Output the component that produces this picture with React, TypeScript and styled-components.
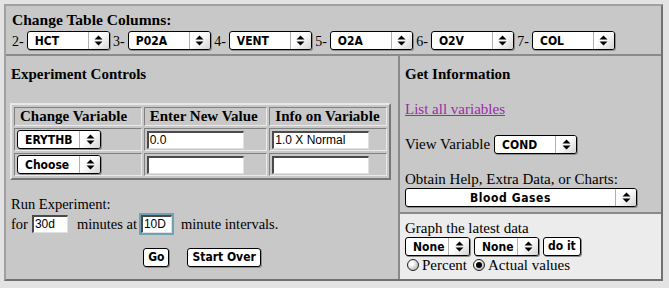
import React from 'react'
import styled, { createGlobalStyle } from 'styled-components'

const serif = '"Liberation Serif", "Times New Roman", Times, serif'

const GlobalStyle = createGlobalStyle`
  html, body {
    margin: 0;
    background: #e3e3e3;
  }
  body {
    font-family: ${serif};
    font-size: 15px;
    color: #000;
  }
`

const Page = styled.div`
  padding: 4px 0 0 4px;
`

const Frame = styled.div`
  width: 655px;
  height: 273px;
  border: 2px solid;
  border-color: #a0a0a0 #707070 #707070 #a0a0a0;
  background: #c8c8c8;
  display: grid;
  grid-template-columns: 394px 1fr;
  grid-template-rows: 50px 1fr;
`

const TopSection = styled.div`
  grid-column: 1 / 3;
  border-bottom: 2px solid #8a8a8a;
  padding: 5px 0 0 6px;
`

const Heading = styled.div`
  font-weight: 700;
  font-size: 15.5px;
  line-height: 17px;
`

const ColumnRow = styled.div`
  display: flex;
  align-items: center;
  margin-top: 3px;
`

const ColNum = styled.span`
  font-size: 14px;
  margin: 3px 3px 0 0;
  &:not(:first-child) {
    margin-left: 3.4px;
  }
`

const Popup = styled.div<{ w: number }>`
  width: ${p => p.w}px;
  height: 17px;
  box-sizing: content-box;
  border: 1px solid #000;
  border-radius: 3px;
  background: #fff;
  box-shadow: 1px 1px 0 #8c8c8c;
  display: flex;
  align-items: stretch;
  font-family: "DejaVu Sans Condensed", "Liberation Sans Narrow", sans-serif;
  font-weight: bold;
  font-size: 12px;
  overflow: hidden;
  flex-shrink: 0;
`

const PopupLabel = styled.span<{ center?: boolean }>`
  flex: 1;
  display: flex;
  align-items: center;
  justify-content: ${p => (p.center ? 'center' : 'flex-start')};
  padding-left: ${p => (p.center ? '0' : '7px')};
  letter-spacing: ${p => (p.center ? '0.6px' : '0')};
`

const PopupArrow = styled.span`
  width: 20px;
  border-left: 1px solid #b0b0b0;
  background: linear-gradient(135deg, #ffffff 40%, #d4d4d4);
  display: flex;
  align-items: center;
  justify-content: center;
`

const Arrows = () => (
  <svg width="9" height="11" viewBox="0 0 9 11">
    <path d="M4.5 0.5 L8.5 4.5 L0.5 4.5 Z" fill="#000" />
    <path d="M0.5 6.5 L8.5 6.5 L4.5 10.5 Z" fill="#000" />
  </svg>
)

const Select = ({ label, w, center }: { label: string; w: number; center?: boolean }) => (
  <Popup w={w}>
    <PopupLabel center={center}>{label}</PopupLabel>
    <PopupArrow>
      <Arrows />
    </PopupArrow>
  </Popup>
)

const LeftSection = styled.div`
  border-right: 2px solid #8a8a8a;
  padding: 10px 0 0 5px;
`

const SubHeading = styled.div`
  font-weight: 700;
  font-size: 15px;
  line-height: 17px;
`

const VarTable = styled.table`
  margin: 20px 0 0 -1px;
  border: 2px solid;
  border-color: #e8e8e8 #777 #777 #e8e8e8;
  border-spacing: 2px;
  width: 381px;
  table-layout: fixed;
`

const HeadCell = styled.th<{ w: number }>`
  width: ${p => p.w}px;
  border: 1px solid;
  border-color: #808080 #eaeaea #eaeaea #808080;
  font-size: 15px;
  font-weight: 700;
  padding: 1px 0 1px 5px;
  line-height: 15px;
  white-space: nowrap;
  overflow: hidden;
  text-align: left;
`

const Cell = styled.td`
  border: 1px solid;
  border-color: #808080 #eaeaea #eaeaea #808080;
  padding: 1px 2px;
  height: 19px;
`

const TextBox = styled.div<{ w: number; focused?: boolean }>`
  width: ${p => p.w}px;
  height: 15px;
  background: #fff;
  border-style: solid;
  border-width: 2px 1px 1px 2px;
  border-color: #4a4a4a #e0e0e0 #e0e0e0 #4a4a4a;
  font-family: "Liberation Sans", Arial, sans-serif;
  font-size: 12px;
  line-height: 15px;
  padding-left: 1px;
  ${p =>
    p.focused &&
    `
    outline: 2px solid #6ea3b6;
    outline-offset: 0;
  `}
`

const RunBlock = styled.div`
  margin-top: 16px;
  line-height: 17px;
  font-size: 14.5px;
`

const InlineRow = styled.div`
  display: flex;
  align-items: center;
  gap: 4px;
  margin-top: 2px;
`

const Spacer = styled.span`
  width: 1px;
`

const ButtonRow = styled.div`
  display: flex;
  justify-content: center;
  gap: 18px;
  margin: 15px 0 0 -5px;
`

const Button = styled.div`
  height: 17px;
  padding: 0 4px;
  border: 1px solid #000;
  border-radius: 3px;
  background: #fff;
  box-shadow: 1px 1px 0 #8c8c8c;
  font-family: "DejaVu Sans Condensed", "Liberation Sans Narrow", sans-serif;
  font-weight: bold;
  font-size: 12px;
  line-height: 17px;
`

const RightColumn = styled.div`
  display: flex;
  flex-direction: column;
`

const InfoSection = styled.div`
  padding: 10px 0 0 5px;
  border-bottom: 2px solid #8a8a8a;
  height: 146px;
`

const Link = styled.a`
  display: inline-block;
  margin-top: 18px;
  color: #9b2aa6;
  text-decoration: underline;
`

const LabelRow = styled.div`
  display: flex;
  align-items: center;
  gap: 4px;
  margin-top: 17px;
`

const Caption = styled.div`
  margin-top: 17px;
  line-height: 17px;
`

const GraphSection = styled.div`
  flex: 1;
  background: #ececec;
  padding: 6px 0 0 5px;
  line-height: 16px;
`

const GraphRow = styled.div`
  display: flex;
  align-items: center;
  gap: 4px;
  margin-top: 1px;
`

const RadioRow = styled.div`
  display: flex;
  align-items: center;
  margin-top: 1px;
  line-height: 16px;
`

const Radio = styled.span<{ checked?: boolean }>`
  width: 10px;
  height: 10px;
  border: 1px solid #222;
  border-radius: 50%;
  background: radial-gradient(circle at 35% 35%, #fff 20%, #a8a8a8 90%);
  margin: 0 3px 0 2px;
  position: relative;
  &::after {
    content: '';
    display: ${p => (p.checked ? 'block' : 'none')};
    position: absolute;
    left: 2px;
    top: 2px;
    width: 6px;
    height: 6px;
    border-radius: 50%;
    background: #000;
  }
`

const RadioLabel = styled.span`
  margin-right: 4px;
`

const columns = ['HCT', 'P02A', 'VENT', 'O2A', 'O2V', 'COL']

export default function App() {
  return (
    <Page>
      <GlobalStyle />
      <Frame>
        <TopSection>
          <Heading>Change Table Columns:</Heading>
          <ColumnRow>
            {columns.map((c, i) => (
              <React.Fragment key={c}>
                <ColNum>{i + 2}-</ColNum>
                <Select label={c} w={81} />
              </React.Fragment>
            ))}
          </ColumnRow>
        </TopSection>

        <LeftSection>
          <SubHeading>Experiment Controls</SubHeading>
          <VarTable>
            <thead>
              <tr>
                <HeadCell w={120}>Change Variable</HeadCell>
                <HeadCell w={116}>Enter New Value</HeadCell>
                <HeadCell w={110}>Info on Variable</HeadCell>
              </tr>
            </thead>
            <tbody>
              <tr>
                <Cell>
                  <Select label="ERYTHB" w={82} />
                </Cell>
                <Cell>
                  <TextBox w={93}>0.0</TextBox>
                </Cell>
                <Cell>
                  <TextBox w={93}>1.0 X Normal</TextBox>
                </Cell>
              </tr>
              <tr>
                <Cell>
                  <Select label="Choose" w={82} />
                </Cell>
                <Cell>
                  <TextBox w={93} />
                </Cell>
                <Cell>
                  <TextBox w={93} />
                </Cell>
              </tr>
            </tbody>
          </VarTable>
          <RunBlock>
            Run Experiment:
            <InlineRow>
              for <TextBox w={32}>30d</TextBox>
              <Spacer />
              minutes at <TextBox w={27} focused>10D</TextBox>
              <Spacer />
              minute intervals.
            </InlineRow>
          </RunBlock>
          <ButtonRow>
            <Button>Go</Button>
            <Button>Start Over</Button>
          </ButtonRow>
        </LeftSection>

        <RightColumn>
          <InfoSection>
            <SubHeading>Get Information</SubHeading>
            <Link href="#">List all variables</Link>
            <LabelRow>
              View Variable <Select label="COND" w={81} />
            </LabelRow>
            <Caption>Obtain Help, Extra Data, or Charts:</Caption>
            <Select label="Blood Gases" w={230} center />
          </InfoSection>
          <GraphSection>
            Graph the latest data
            <GraphRow>
              <Select label="None" w={63} />
              <Select label="None" w={63} />
              <Button>do it</Button>
            </GraphRow>
            <RadioRow>
              <Radio />
              <RadioLabel>Percent</RadioLabel>
              <Radio checked />
              <RadioLabel>Actual values</RadioLabel>
            </RadioRow>
          </GraphSection>
        </RightColumn>
      </Frame>
    </Page>
  )
}
